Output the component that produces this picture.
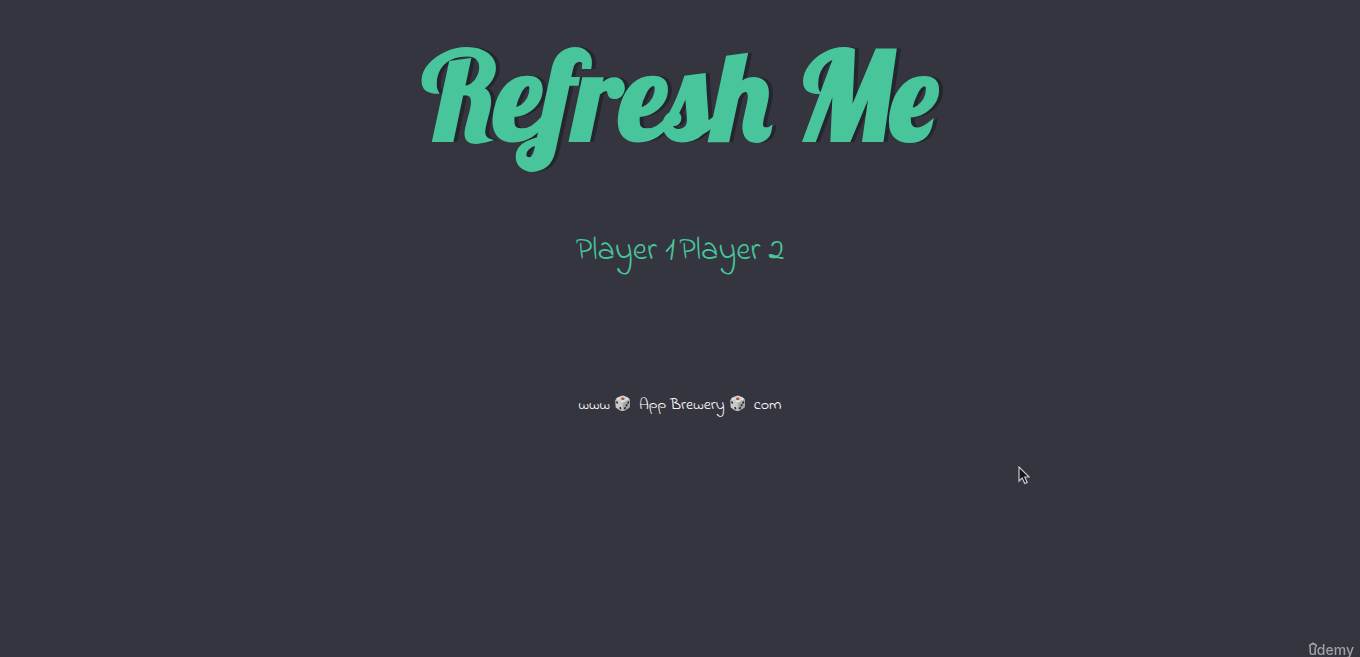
<svelte:head><title>Dicee</title></svelte:head>

<main>
  <h1>Refresh Me</h1>
  <div class="players">
    <p>Player 1</p><p>Player 2</p>
  </div>
  <footer>www <span class="die">🎲</span> App Brewery <span class="die">🎲</span> com</footer>
</main>

<svg class="pointer" viewBox="0 0 12 19" aria-hidden="true">
  <path d="M1 1v14l3.200-3 2.500 5.500 2.500-1.100-2.400-5.400h4.400z" fill="#15161b" stroke="#c8c8cc" stroke-width="1.200" />
</svg>

<div class="brand">
  <svg viewBox="0 0 8 5" aria-hidden="true"><path d="M.8 5V3.200L4 1.200l3.200 2V5" fill="none" stroke="currentColor" stroke-width="1.600" /></svg>
  <span>udemy</span>
</div>

<style>
  :global(body) {
    margin: 0;
    background: #35353f;
  }
  main {
    display: flex;
    flex-direction: column;
    align-items: center;
    padding-top: 15px;
  }
  h1 {
    margin: 0;
    color: #48c59b;
    font: bold 122px/160px Lobster, cursive;
    text-shadow: 4px 0 #23262e;
    text-align: center;
  }
  .players {
    display: flex;
    gap: 4px;
    margin-top: 53px;
    color: #48c59b;
    font: 32px/48px "Indie Flower", cursive;
  }
  p {
    margin: 0;
  }
  footer {
    margin-top: 115px;
    color: #fff;
    font: 16px/28px "Indie Flower", cursive;
  }
  .die {
    margin-right: 4px;
    font-size: 14px;
    vertical-align: 1px;
    filter: saturate(0.6) brightness(0.9);
  }
  .pointer {
    position: absolute;
    left: 1018px;
    top: 466px;
    width: 12px;
    height: 19px;
  }
  .brand {
    position: fixed;
    right: 6px;
    bottom: 0;
    color: #a0a0a6;
    font: 500 14px/14px Inter, sans-serif;
  }
  .brand svg {
    position: absolute;
    left: 1px;
    top: -1px;
    width: 8px;
    height: 5px;
  }
</style>
